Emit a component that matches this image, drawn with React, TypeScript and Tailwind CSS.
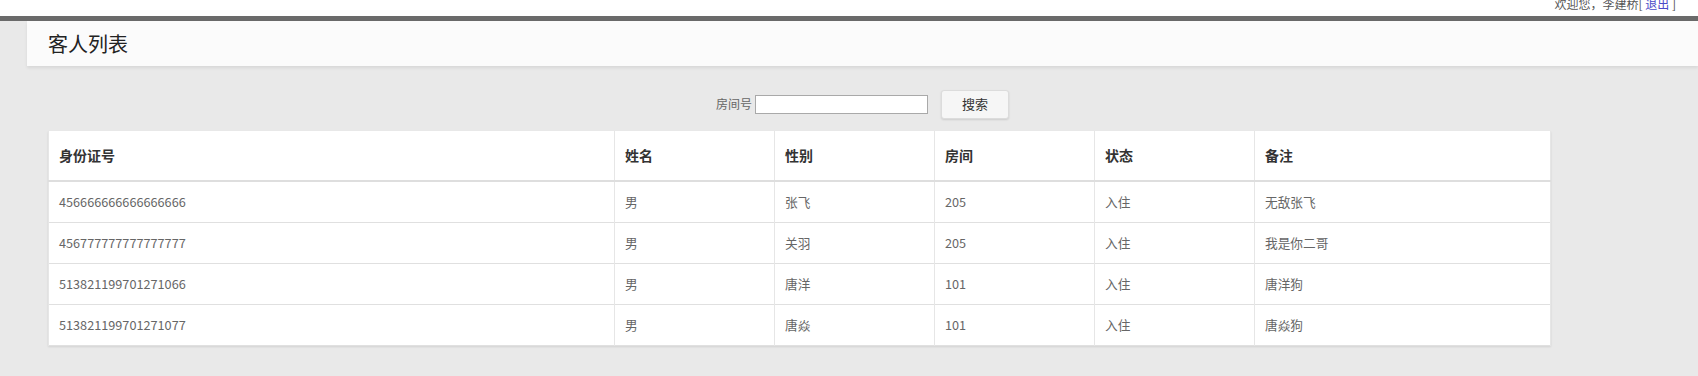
const guests = [
  { id: "456666666666666666", name: "男", sex: "张飞", room: "205", state: "入住", note: "无敌张飞" },
  { id: "456777777777777777", name: "男", sex: "关羽", room: "205", state: "入住", note: "我是你二哥" },
  { id: "513821199701271066", name: "男", sex: "唐洋", room: "101", state: "入住", note: "唐洋狗" },
  { id: "513821199701271077", name: "男", sex: "唐焱", room: "101", state: "入住", note: "唐焱狗" },
];

const heads = ["身份证号", "姓名", "性别", "房间", "状态", "备注"];
const widths = ["w-[566px]", "w-[160px]", "w-[160px]", "w-[160px]", "w-[160px]", "w-[296px]"];

export default function App() {
  return (
    <div className="min-h-[376px] bg-[#e9e9e9] font-['Microsoft_YaHei','Noto_Sans_CJK_SC',sans-serif]">
      <div className="flex h-[16px] justify-end overflow-hidden bg-white pr-[22px]">
        <span className="-mt-[3px] text-[12px] leading-[14px] text-[#555]">
          欢迎您，李建桥[ <a className="text-[#4a4ac8]">退出</a> ]
        </span>
      </div>
      <div className="h-[5px] bg-[#6a6a6a]" />

      <div className="pl-[27px]">
        <div className="flex h-[45px] items-center bg-[#fbfbfb] pl-[21px] shadow-[0_2px_3px_rgba(0,0,0,0.08)]">
          <h1 className="text-[20px] leading-[24px] text-[#222]">客人列表</h1>
        </div>

        <div className="flex h-[65px] items-center justify-center pt-[11px]">
          <label className="mr-[3px] text-[12px] text-[#666]">房间号</label>
          <input className="h-[19px] w-[173px] border border-[#a9a9a9] bg-white" type="text" />
          <button
            className="ml-[13px] h-[29px] w-[68px] rounded-[3px] border border-[#dcdcdc] bg-[#f6f6f6] text-[13px] text-[#333] shadow-[0_1px_2px_rgba(0,0,0,0.12)]"
            type="button"
          >
            搜索
          </button>
        </div>
      </div>

      <table className="ml-[48px] w-[1502px] table-fixed border-collapse bg-white shadow-[0_1px_2px_rgba(0,0,0,0.1)]">
        <thead>
          <tr className="h-[50px] border-b-2 border-[#dedede]">
            {heads.map((h, i) => (
              <th
                className={`${widths[i]} border-x border-[#e6e6e6] px-[10px] text-left text-[14px] font-bold text-[#333]`}
                key={h}
              >
                {h}
              </th>
            ))}
          </tr>
        </thead>
        <tbody>
          {guests.map((g) => (
            <tr className="h-[41px] border-b border-[#e0e0e0]" key={g.id}>
              {[g.id, g.name, g.sex, g.room, g.state, g.note].map((v, i) => (
                <td className="border-x border-[#e6e6e6] px-[10px] text-[12.7px] text-[#666]" key={i}>
                  {v}
                </td>
              ))}
            </tr>
          ))}
        </tbody>
      </table>
    </div>
  );
}
